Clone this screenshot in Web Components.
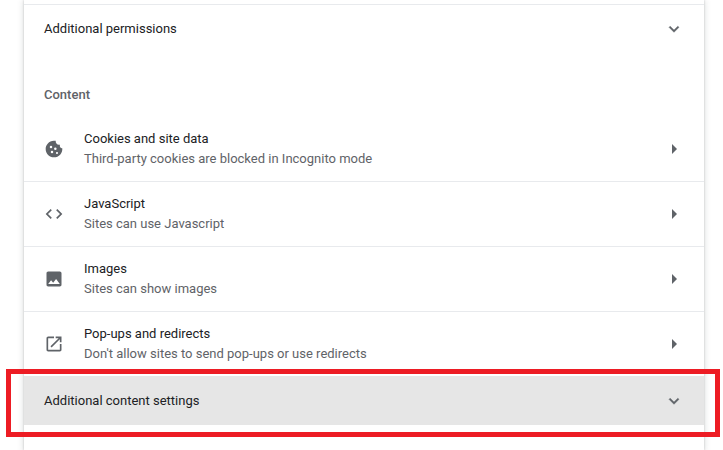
<!DOCTYPE html>
<html><head><meta charset="utf-8">
<style>
html,body{margin:0;height:450px;overflow:hidden;background:#fff;font-family:Roboto,"Liberation Sans",sans-serif;}
</style></head><body>
<settings-page>
  <div class="x"></div>
  <expand-row>Additional permissions</expand-row>
  <section-title>Content</section-title>
  <link-row label="Cookies and site data" sub="Third-party cookies are blocked in Incognito mode" icon="cookie" first></link-row>
  <link-row label="JavaScript" sub="Sites can use Javascript" icon="code"></link-row>
  <link-row label="Images" sub="Sites can show images" icon="image"></link-row>
  <link-row label="Pop-ups and redirects" sub="Don't allow sites to send pop-ups or use redirects" icon="launch"></link-row>
  <expand-row highlight>Additional content settings</expand-row>
</settings-page>
<red-box></red-box>
<script>
const ICONS={
cookie:'<path fill-rule="evenodd" d="M21.95 10.99c-1.79-.03-3.7-1.95-2.68-4.22-2.98 1-5.77-1.59-5.19-4.56C6.95.71 2 6.58 2 12c0 5.52 4.48 10 10 10 5.89 0 10.54-5.08 9.95-11.01zM8.4 8.1a1.5 1.5 0 1 0 0 3 1.5 1.5 0 0 0 0-3zM13.6 10.1a1.5 1.5 0 1 0 0 3 1.5 1.5 0 0 0 0-3zM9.6 14.1a1.5 1.5 0 1 0 0 3 1.5 1.5 0 0 0 0-3zM15.6 15.5a1.3 1.3 0 1 0 0 2.6 1.3 1.3 0 0 0 0-2.6z"/>',
code:'<path d="M9.4 16.6L4.8 12l4.6-4.6L8 6l-6 6 6 6 1.4-1.4zm5.2 0l4.6-4.6-4.6-4.6L16 6l6 6-6 6-1.4-1.4z"/>',
image:'<path d="M21 19V5c0-1.1-.9-2-2-2H5c-1.1 0-2 .9-2 2v14c0 1.1.9 2 2 2h14c1.1 0 2-.9 2-2zM8.5 13.5l2.5 3.01L14.5 12l4.5 6H5l3.5-4.5z"/>',
launch:'<path d="M19 19H5V5h7V3H5c-1.11 0-2 .9-2 2v14c0 1.1.89 2 2 2h14c1.1 0 2-.9 2-2v-7h-2v7zM14 3v2h3.59l-9.83 9.83 1.41 1.41L19 6.41V10h2V3h-7z"/>'
};
function def(name,html,setup){
  customElements.define(name,class extends HTMLElement{
    constructor(){super();this.attachShadow({mode:'open'}).innerHTML=html;}
    connectedCallback(){setup&&setup(this);}
  });
}
def('settings-page',`<style>
:host{display:flex;flex-direction:column;box-sizing:border-box;width:680px;height:450px;margin-left:24px;background:#fff;
box-shadow:0 0 2px rgba(60,64,67,.25),0 1px 6px 1px rgba(60,64,67,.15);}
::slotted(.x){height:4px;border-bottom:1px solid #e8eaed;flex:none}
</style><slot></slot>`);
const CHEV='<svg width="20" height="20" viewBox="0 0 24 24" fill="#5f6368" stroke="#5f6368" stroke-width=".5"><path d="M16.59 8.59L12 13.17 7.41 8.59 6 10l6 6 6-6z"/></svg>';
def('expand-row',`<style>
:host{display:flex;align-items:center;justify-content:space-between;height:47px;padding:0 20px;font-size:13px;color:#202124;flex:none}
:host([highlight]){background:#e6e6e6;height:49px}
svg{display:block}
</style><span><slot></slot></span>${CHEV}`);
def('section-title',`<style>
:host{display:flex;align-items:center;height:64px;padding:20px 20px 0;font-size:13px;font-weight:500;color:#5f6368;flex:none;box-sizing:border-box}
</style><slot></slot>`);
def('link-row',`<style>
:host{display:flex;align-items:center;height:65px;box-sizing:border-box;padding:0 20px;border-top:1px solid #e8eaed;flex:none}
:host([first]){border-top:0}
.ic{width:20px;height:20px;margin-right:20px;flex:none;fill:#5f6368;display:block}
.t{flex:1;display:flex;flex-direction:column;gap:2px;font-size:13px;line-height:18px}
.l{color:#202124}.s{color:#5f6368}
.a{width:20px;height:20px;flex:none;display:flex;align-items:center;justify-content:center}
</style><svg class="ic" viewBox="0 0 24 24"></svg><div class="t"><div class="l"></div><div class="s"></div></div>
<div class="a"><svg width="20" height="20" viewBox="0 0 20 20" fill="#5f6368"><path d="M8 5l5 5-5 5z"/></svg></div>`,
el=>{const r=el.shadowRoot;r.querySelector('.ic').innerHTML=ICONS[el.getAttribute('icon')];
r.querySelector('.l').textContent=el.getAttribute('label');r.querySelector('.s').textContent=el.getAttribute('sub');});
def('red-box',`<style>
:host{position:absolute;left:6px;top:369px;width:714px;height:68px;box-sizing:border-box;border:5px solid #ed1c24;pointer-events:none}
</style>`);
</script>
</body></html>
